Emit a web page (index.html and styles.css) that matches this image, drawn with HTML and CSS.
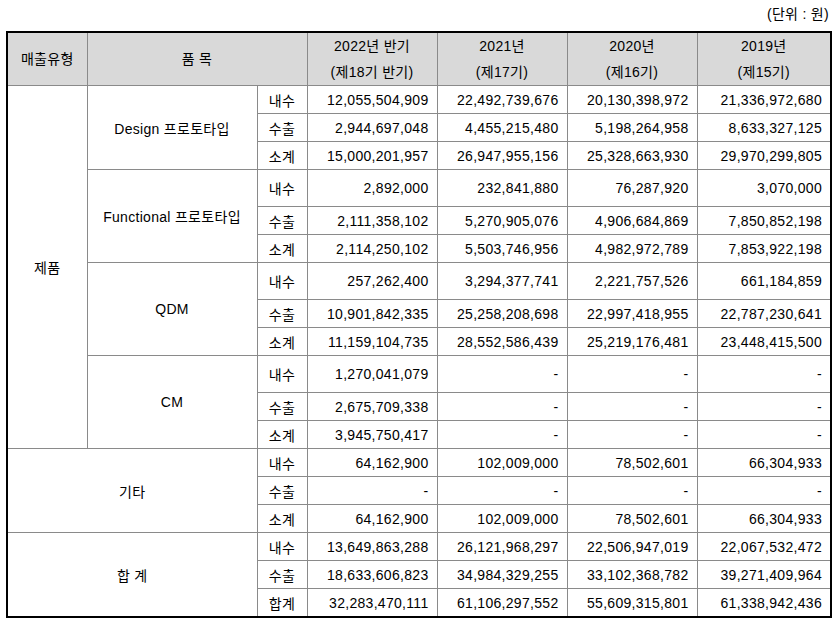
FILE: index.html
```html
<!DOCTYPE html>
<html lang="ko">
<head>
<meta charset="utf-8">
<title>매출실적</title>
<link rel="stylesheet" href="styles.css">
</head>
<body>
<div class="page">
  <div class="unit">(단위 : 원)</div>
  <table class="sales">
    <colgroup>
      <col class="c-type">
      <col class="c-item">
      <col class="c-kind">
      <col class="c-num">
      <col class="c-num">
      <col class="c-num">
      <col class="c-last">
    </colgroup>
    <thead>
      <tr>
        <th>매출유형</th>
        <th colspan="2">품 목</th>
        <th>2022년 반기<br>(제18기 반기)</th>
        <th>2021년<br>(제17기)</th>
        <th>2020년<br>(제16기)</th>
        <th>2019년<br>(제15기)</th>
      </tr>
    </thead>
    <tbody>
      <tr class="r">
        <td rowspan="12" class="lbl">제품</td>
        <td rowspan="3" class="lbl">Design 프로토타입</td>
        <td class="kind">내수</td>
        <td class="num">12,055,504,909</td><td class="num">22,492,739,676</td><td class="num">20,130,398,972</td><td class="num">21,336,972,680</td>
      </tr>
      <tr class="r">
        <td class="kind">수출</td>
        <td class="num">2,944,697,048</td><td class="num">4,455,215,480</td><td class="num">5,198,264,958</td><td class="num">8,633,327,125</td>
      </tr>
      <tr class="r">
        <td class="kind">소계</td>
        <td class="num">15,000,201,957</td><td class="num">26,947,955,156</td><td class="num">25,328,663,930</td><td class="num">29,970,299,805</td>
      </tr>
      <tr class="r tall">
        <td rowspan="3" class="lbl">Functional 프로토타입</td>
        <td class="kind">내수</td>
        <td class="num">2,892,000</td><td class="num">232,841,880</td><td class="num">76,287,920</td><td class="num">3,070,000</td>
      </tr>
      <tr class="r">
        <td class="kind">수출</td>
        <td class="num">2,111,358,102</td><td class="num">5,270,905,076</td><td class="num">4,906,684,869</td><td class="num">7,850,852,198</td>
      </tr>
      <tr class="r">
        <td class="kind">소계</td>
        <td class="num">2,114,250,102</td><td class="num">5,503,746,956</td><td class="num">4,982,972,789</td><td class="num">7,853,922,198</td>
      </tr>
      <tr class="r tall">
        <td rowspan="3" class="lbl">QDM</td>
        <td class="kind">내수</td>
        <td class="num">257,262,400</td><td class="num">3,294,377,741</td><td class="num">2,221,757,526</td><td class="num">661,184,859</td>
      </tr>
      <tr class="r">
        <td class="kind">수출</td>
        <td class="num">10,901,842,335</td><td class="num">25,258,208,698</td><td class="num">22,997,418,955</td><td class="num">22,787,230,641</td>
      </tr>
      <tr class="r">
        <td class="kind">소계</td>
        <td class="num">11,159,104,735</td><td class="num">28,552,586,439</td><td class="num">25,219,176,481</td><td class="num">23,448,415,500</td>
      </tr>
      <tr class="r tall">
        <td rowspan="3" class="lbl">CM</td>
        <td class="kind">내수</td>
        <td class="num">1,270,041,079</td><td class="num">-</td><td class="num">-</td><td class="num">-</td>
      </tr>
      <tr class="r">
        <td class="kind">수출</td>
        <td class="num">2,675,709,338</td><td class="num">-</td><td class="num">-</td><td class="num">-</td>
      </tr>
      <tr class="r">
        <td class="kind">소계</td>
        <td class="num">3,945,750,417</td><td class="num">-</td><td class="num">-</td><td class="num">-</td>
      </tr>
      <tr class="r">
        <td rowspan="3" colspan="2" class="lbl">기타</td>
        <td class="kind">내수</td>
        <td class="num">64,162,900</td><td class="num">102,009,000</td><td class="num">78,502,601</td><td class="num">66,304,933</td>
      </tr>
      <tr class="r">
        <td class="kind">수출</td>
        <td class="num">-</td><td class="num">-</td><td class="num">-</td><td class="num">-</td>
      </tr>
      <tr class="r">
        <td class="kind">소계</td>
        <td class="num">64,162,900</td><td class="num">102,009,000</td><td class="num">78,502,601</td><td class="num">66,304,933</td>
      </tr>
      <tr class="r">
        <td rowspan="3" colspan="2" class="lbl">합 계</td>
        <td class="kind">내수</td>
        <td class="num">13,649,863,288</td><td class="num">26,121,968,297</td><td class="num">22,506,947,019</td><td class="num">22,067,532,472</td>
      </tr>
      <tr class="r">
        <td class="kind">수출</td>
        <td class="num">18,633,606,823</td><td class="num">34,984,329,255</td><td class="num">33,102,368,782</td><td class="num">39,271,409,964</td>
      </tr>
      <tr class="r">
        <td class="kind">합계</td>
        <td class="num">32,283,470,111</td><td class="num">61,106,297,552</td><td class="num">55,609,315,801</td><td class="num">61,338,942,436</td>
      </tr>
    </tbody>
  </table>
</div>
</body>
</html>
```

FILE: styles.css
```css
html, body {
  margin: 0;
  padding: 0;
  background: #ffffff;
}

body {
  font-family: "Liberation Sans", "Noto Sans CJK KR", sans-serif;
  font-size: 14px;
  letter-spacing: 0.3px;
  color: #000000;
}

.page {
  padding: 0 0 0 6px;
  width: 825px;
}

.unit {
  height: 28px;
  line-height: 28px;
  text-align: right;
  margin-bottom: 3px;
  padding-right: 2px;
}

.sales {
  border-collapse: collapse;
  table-layout: fixed;
  width: 824px;
  border: 2px solid #000000;
}

.c-type { width: 80px; }
.c-item { width: 170px; }
.c-kind { width: 50px; }
.c-num { width: 130px; }
.c-last { width: 134px; }

.sales th,
.sales td {
  border: 1px solid #8a8a8a;
  padding: 0;
  font-weight: normal;
  vertical-align: middle;
}

.sales th {
  background: #d9d9d9;
  height: 48px;
  line-height: 26px;
  text-align: center;
}

.sales .r td {
  height: 27px;
}

.sales .r.tall td {
  height: 36px;
}

.sales td.lbl {
  text-align: center;
}

.sales td.kind {
  text-align: center;
}

.sales td.num {
  text-align: right;
  padding-right: 8px;
}
```
